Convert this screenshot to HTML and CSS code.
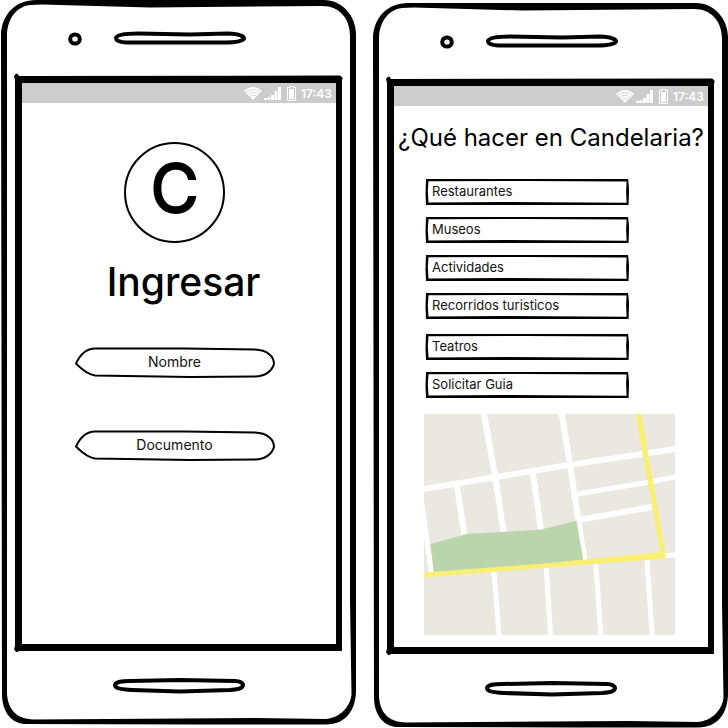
FILE: index.html
```html
<!DOCTYPE html>
<html lang="es">
<head>
<meta charset="utf-8">
<meta name="viewport" content="width=device-width, initial-scale=1">
<title>Candelaria</title>
<link rel="stylesheet" href="styles.css">
</head>
<body>
<svg class="defs" aria-hidden="true">
  <symbol id="frame" viewBox="0 0 356 725" preserveAspectRatio="none">
    <path fill-rule="evenodd" d="M36 0 L324 0 C342 0 356 16 356 34 L356 690 C356 710 346 724.500 326 724.500 L200 724.500 L24 724 C8 722 2 708 2 694 L1 34 C2 14 16 0 36 0 Z M42 4.500 L30 5 C14 7 7 22 7 36 L7 694 C8 708 15 719 34 719.500 L255 718 L325 719 C341 718 350 706 351.500 695 L350 600 L350 36 C350 19 340 6 322 6 L150 7.500 Z"/>
    <path fill-rule="evenodd" d="M14 76 Q17 71 19 76 L340 75.500 Q344 78 342 80 L342 651 L19 651 Q16 654 14 649 L15 646 L15 80 Z M22 83 L22 644 L336 644 L336 83 Z"/>
    <ellipse class="line" cx="75" cy="39" rx="4.800" ry="4.600"/>
    <path class="line" d="M116 38 C117 34 128 33.500 138 33.500 L190 34.500 L228 33.500 C239 34 244 36 244 38.500 C242 42 232 42.500 225 42.500 L126 42.500 C119 42 116 40.500 116 38 Z"/>
    <path class="line" d="M115 685 C116 681.500 122 681 130 681 L180 680 L235 681 C240 681 243 683 243 685.500 C242 689 237 689.500 230 690 L180 691.500 L132 690 C120 689.500 115 688 115 685 Z"/>
  </symbol>
  <symbol id="status" viewBox="0 0 54 20">
    <path fill="#fff" d="M0 8 Q9 0 18 8 L9 17 Z"/>
    <g fill="none" stroke="#ccc" stroke-width=".8">
      <path d="M1.500 9.500 Q9 3.500 16.500 9.500"/>
      <path d="M3.500 11.500 Q9 7 14.500 11.500"/>
      <path d="M5.500 13.500 Q9 10.500 12.500 13.500"/>
    </g>
    <path fill="#fff" d="M20 15h3v2h-3z M23.500 14h3v3h-3z M27 12h3v5h-3z M30.500 8h3v9h-3z M34 4h3v13h-3z"/>
    <path fill="none" stroke="#fff" d="M43.500 4.500h2v-1h4v1h2v13h-8z"/>
    <path fill="#fff" d="M45 6h5v10h-5z"/>
  </symbol>
  <symbol id="pill" viewBox="0 0 200 31" preserveAspectRatio="none">
    <path class="thin" d="M1 16.500 C5 8 11 1.500 20 1.500 L110 1.500 L180 2.500 C192 3 199 9 199 17 C197 24 190 29.500 180 29.500 L115 30 L20 28.500 C11 27 6 21 1 16.500 Z"/>
  </symbol>
  <symbol id="box" viewBox="0 0 204 26" preserveAspectRatio="none">
    <path fill-rule="evenodd" d="M1 0 L100 0 L203 0 L204 10 L203.500 26 L140 26 L80 26 L1 26 L.5 14 Z M3.500 2.200 L2.800 12 L3.500 23.500 L80 23 L201.500 23.800 L201 12 L201.500 2.500 L100 2 Z"/>
  </symbol>
</svg>

<main class="board">
  <section class="phone" aria-label="Ingresar">
    <svg class="outline" aria-hidden="true"><use href="#frame"/></svg>
    <div class="screen">
      <header class="status"><svg class="status-icons" aria-hidden="true"><use href="#status"/></svg><time>17:43</time></header>
      <form class="login">
        <div class="logo">C</div>
        <h1 class="login-title">Ingresar</h1>
        <div class="field">
          <svg class="outline" aria-hidden="true"><use href="#pill"/></svg>
          <input class="field-input" type="text" placeholder="Nombre" aria-label="Nombre">
        </div>
        <div class="field">
          <svg class="outline" aria-hidden="true"><use href="#pill"/></svg>
          <input class="field-input" type="text" placeholder="Documento" aria-label="Documento">
        </div>
      </form>
    </div>
  </section>

  <section class="phone phone-low" aria-label="Candelaria">
    <svg class="outline" aria-hidden="true"><use href="#frame"/></svg>
    <div class="screen">
      <header class="status"><svg class="status-icons" aria-hidden="true"><use href="#status"/></svg><time>17:43</time></header>
      <h2 class="guide-title">¿Qué hacer en Candelaria?</h2>
      <nav class="menu">
        <div class="menu-group">
          <button class="option" type="button"><svg class="outline" aria-hidden="true"><use href="#box"/></svg>Restaurantes</button>
          <button class="option" type="button"><svg class="outline" aria-hidden="true"><use href="#box"/></svg>Museos</button>
          <button class="option" type="button"><svg class="outline" aria-hidden="true"><use href="#box"/></svg>Actividades</button>
          <button class="option" type="button"><svg class="outline" aria-hidden="true"><use href="#box"/></svg>Recorridos turisticos</button>
        </div>
        <div class="menu-group">
          <button class="option" type="button"><svg class="outline" aria-hidden="true"><use href="#box"/></svg>Teatros</button>
          <button class="option" type="button"><svg class="outline" aria-hidden="true"><use href="#box"/></svg>Solicitar Guia</button>
        </div>
      </nav>
      <svg class="map" viewBox="0 0 252 222" role="img" aria-label="Mapa">
        <path fill="#ebe8e2" d="M0 0h252v222H0z"/>
        <g fill="none" stroke="#fff">
          <path stroke-width="6" d="M-1 75.500 L68 64 L146 51 L253 35"/>
          <path stroke-width="6" d="M60 -1 L72 66 L80 120"/>
          <path stroke-width="6" d="M138 -1 L147 54 L161 148"/>
          <path stroke-width="6" d="M33 72 L41 124 M109 58 L118 120"/>
          <path stroke-width="5" d="M152 80.500 L222 69 L253 63"/>
          <path stroke-width="6" d="M157 106 L230 93"/>
          <path stroke-width="5" d="M-2 90 L7.500 160 M238 142.500 L253 141"/>
          <path stroke-width="5" d="M70 156 L75.500 223 M122.500 150 L127 223 M172 146 L177.500 223 M223.500 144 L229 223"/>
        </g>
        <path fill="#bad4ac" d="M6.500 130.500 L43 120.500 L118 116 L153 107 L160 148 L10 160 Z"/>
        <path fill="#faef75" d="M0 159 L120 150 L237 138.500 L212 0 L218 0 L242 138 L242 145 L120 154.500 L0 164 Z"/>
      </svg>
    </div>
  </section>
</main>
</body>
</html>
```

FILE: styles.css
```css
* {
  box-sizing: border-box;
}

body {
  margin: 0;
  background: #fff;
  color: #000;
  font-family: Inter, "Open Sans", sans-serif;
  font-size: 13px;
}

.defs {
  position: absolute;
  width: 0;
  height: 0;
}

.board {
  display: grid;
  grid-template-columns: 1fr 1fr;
  gap: 16px;
  align-items: start;
}

.phone {
  position: relative;
  padding: 83px 20px 81px 22px;
}

.phone-low {
  margin-top: 3px;
}

.outline {
  position: absolute;
  inset: 0;
  width: 100%;
  height: 100%;
  pointer-events: none;
}

.line {
  fill: #fff;
  stroke: #000;
  stroke-width: 4;
}

.thin {
  fill: #fff;
  stroke: #000;
  stroke-width: 2;
}

.screen {
  position: relative;
  min-height: 561px;
}

.status {
  display: flex;
  justify-content: flex-end;
  align-items: center;
  gap: 3px;
  height: 20px;
  padding-right: 4px;
  background: #ccc;
  color: #fff;
  font-size: 12px;
  font-weight: 600;
}

.status-icons {
  width: 54px;
  height: 20px;
}

.login {
  display: flex;
  flex-direction: column;
  align-items: center;
  padding: 39px 9px 0 0;
}

.logo {
  width: 101px;
  height: 101px;
  border: 2px solid #000;
  border-radius: 50%;
  font-size: 66px;
  font-weight: 400;
  line-height: 88px;
  text-align: center;
  -webkit-text-stroke: 2px #000;
}

.login-title {
  margin: 15px 0 41px;
  padding-left: 18px;
  font-size: 39px;
  font-weight: 500;
  line-height: 48px;
}

.field {
  position: relative;
  width: 200px;
  max-width: 100%;
  margin-bottom: 52px;
}

.field-input {
  position: relative;
  display: block;
  width: 100%;
  height: 31px;
  padding: 0 16px 2px;
  border: 0;
  background: transparent;
  color: #000;
  font: inherit;
  font-size: 14px;
  text-align: center;
}

.field-input::placeholder {
  color: #111;
  opacity: 1;
}

.guide-title {
  margin: 16px 0 25px;
  font-size: 24px;
  font-weight: 400;
  line-height: 32px;
  text-align: center;
  white-space: nowrap;
}

.menu {
  display: flex;
  flex-direction: column;
  gap: 15px;
  width: 65%;
  margin-left: 31px;
}

.menu-group {
  display: flex;
  flex-direction: column;
  gap: 12px;
}

.option {
  position: relative;
  height: 26px;
  padding: 0 7px 2px;
  border: 0;
  background: transparent;
  color: #111;
  font: inherit;
  line-height: 24px;
  text-align: left;
}

.map {
  display: block;
  width: 80%;
  margin: 16px 0 0 30px;
}
```
